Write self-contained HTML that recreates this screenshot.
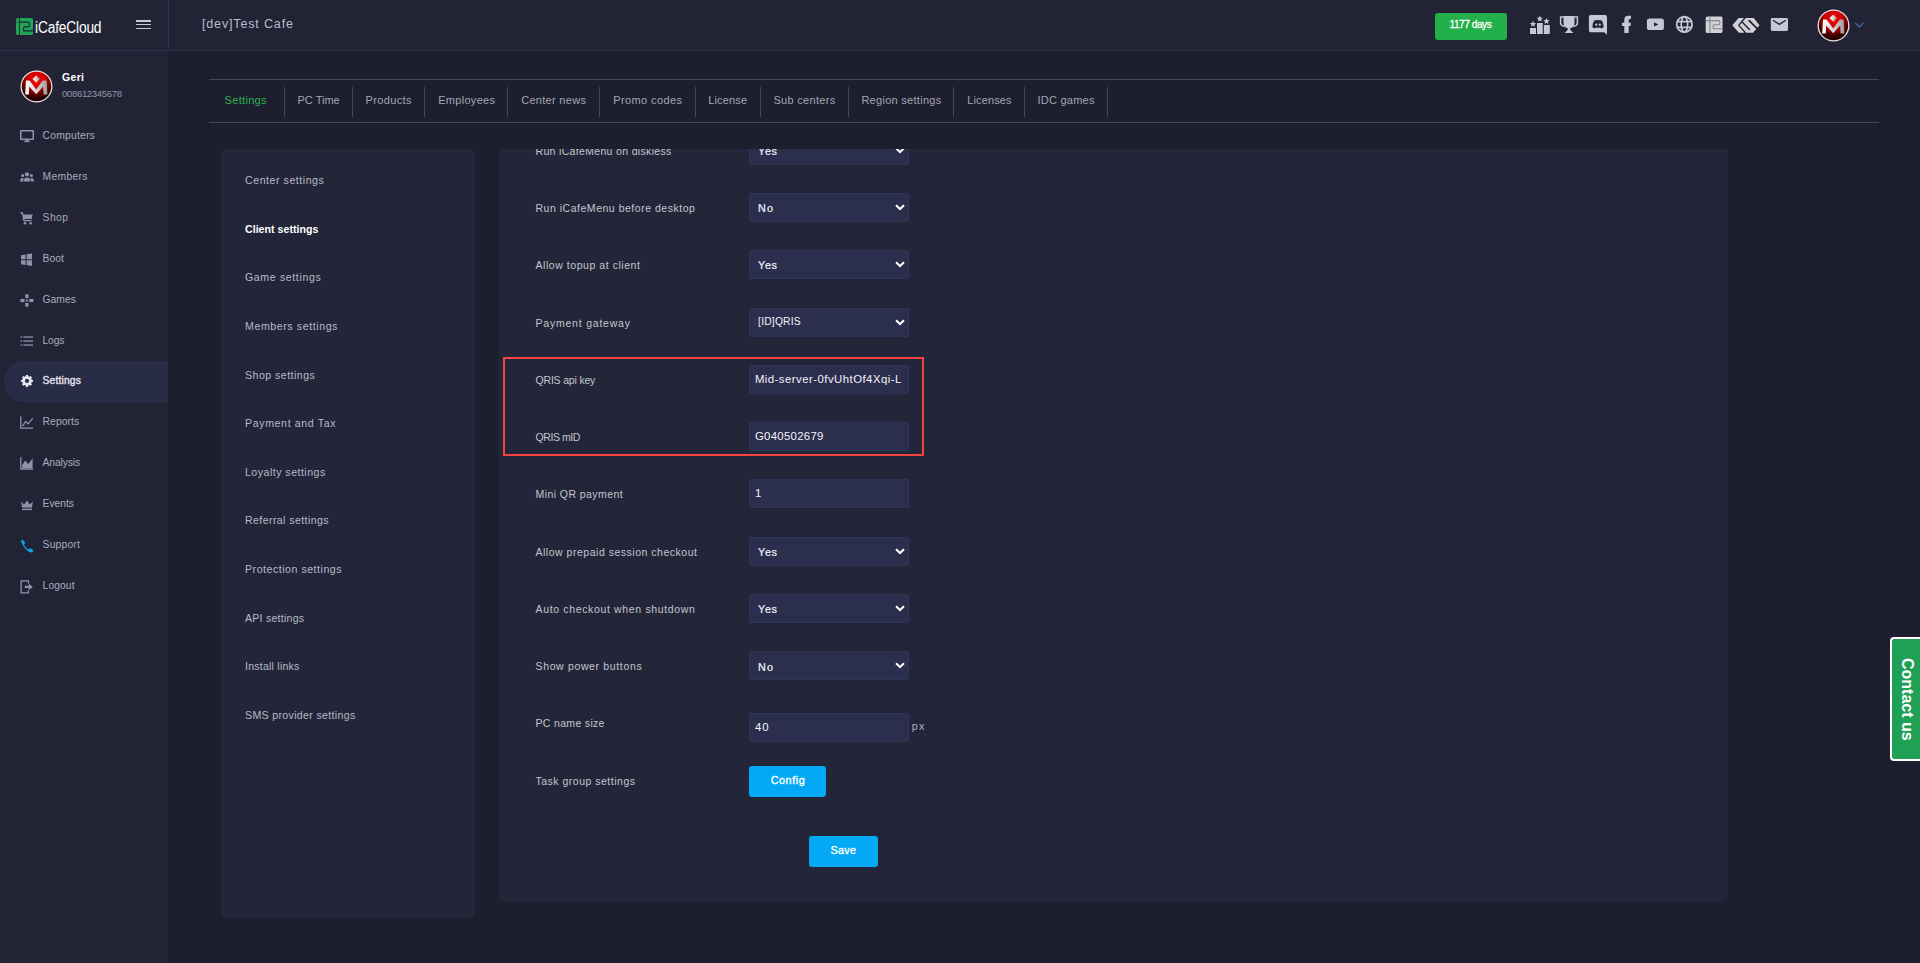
<!DOCTYPE html><html><head><meta charset="utf-8"><style>
*{box-sizing:border-box;margin:0;padding:0}
html,body{width:1920px;height:963px;overflow:hidden;background:#1d1e2e;font-family:"Liberation Sans",sans-serif;}
.abs{position:absolute}
.t{position:absolute;white-space:nowrap;line-height:20px;display:block}
svg{position:absolute;display:block}
</style></head><body>
<div class="abs" style="left:0;top:0;width:1920px;height:50px;background:#222436"></div>
<div class="abs" style="left:0;top:50px;width:1920px;height:1px;background:#30324e"></div>
<div class="abs" style="left:168px;top:0;width:1px;height:50px;background:#30324e"></div>
<div class="abs" style="left:0;top:51px;width:168px;height:912px;background:#222436"></div>
<svg style="left:15px;top:17px" width="19" height="19" viewBox="15 17 19 19">
<rect x="16" y="17.9" width="17" height="17" rx="1.6" fill="#1fa456"/>
<path d="M19.45 17.9 V34.9" stroke="#222436" stroke-width="0.9"/>
<path d="M16 22.15 H19" stroke="#222436" stroke-width="1.2" opacity="0.55"/>
<path d="M19.9 22.15 H28.3 Q29.4 22.15 29.4 23.3 V25.7 Q29.4 26.8 28.3 26.8 H24.7 Q23.6 26.8 23.6 27.9 V30.9 H33" stroke="#222436" stroke-width="1.15" fill="none"/>
</svg>
<span id="t0" class="t" style="letter-spacing:-1.111px;left:35.00px;top:17.96px;font-size:16px;color:#ffffff;font-weight:400;transform:scaleX(0.86);transform-origin:0 0;letter-spacing:-0.2px;">iCafeCloud</span>
<div class="abs" style="left:136px;top:20px;width:15px;height:1.5px;background:#c9cbd4;border-radius:0.5px"></div>
<div class="abs" style="left:136px;top:23.75px;width:15px;height:1.5px;background:#c9cbd4;border-radius:0.5px"></div>
<div class="abs" style="left:136px;top:27.5px;width:15px;height:1.5px;background:#c9cbd4;border-radius:0.5px"></div>
<span id="t1" class="t" style="letter-spacing:0.846px;left:202.00px;top:14.27px;font-size:12.5px;color:#babdc9;font-weight:400;">[dev]Test Cafe</span>
<div class="abs" style="left:1435px;top:13px;width:72px;height:27px;background:#22b04b;border-radius:3px"></div>
<span id="t2" class="t" style="letter-spacing:-0.500px;left:1449.50px;top:15.47px;font-size:10.2px;color:#ffffff;font-weight:400;-webkit-text-stroke:0.3px #fff;">1177 days</span>
<svg style="left:1529px;top:14px" width="22" height="21" viewBox="1529 14 22 21">
<rect x="1530" y="28" width="6" height="6" fill="#c6c9d4"/><rect x="1537" y="23" width="5.7" height="11" fill="#c6c9d4"/><rect x="1543.8" y="25" width="6" height="9" fill="#c6c9d4"/>
<path id="st" d="M0 -3.2 L0.95 -1.1 L3.1 -1 L1.5 0.5 L1.95 2.7 L0 1.6 L-1.95 2.7 L-1.5 0.5 L-3.1 -1 L-0.95 -1.1 Z" fill="#c6c9d4" transform="translate(1533 24)"/>
<path d="M0 -3.2 L0.95 -1.1 L3.1 -1 L1.5 0.5 L1.95 2.7 L0 1.6 L-1.95 2.7 L-1.5 0.5 L-3.1 -1 L-0.95 -1.1 Z" fill="#c6c9d4" transform="translate(1539.8 18.8)"/>
<path d="M0 -3.2 L0.95 -1.1 L3.1 -1 L1.5 0.5 L1.95 2.7 L0 1.6 L-1.95 2.7 L-1.5 0.5 L-3.1 -1 L-0.95 -1.1 Z" fill="#c6c9d4" transform="translate(1546.5 21.2)"/>
</svg>
<svg style="left:1559px;top:15px" width="20" height="19" viewBox="1559 15 20 19">
<path d="M1563.5 16 H1574.5 V23 Q1574.5 27 1570.3 28.2 V30 L1573.5 33 H1564.5 L1567.7 30 V28.2 Q1563.5 27 1563.5 23 Z" fill="#c6c9d4"/>
<path d="M1563.8 17 H1560.6 V23 Q1560.6 25.8 1564.8 26.4" stroke="#c6c9d4" stroke-width="1.5" fill="none"/>
<path d="M1574.2 17 H1577.4 V23 Q1577.4 25.8 1573.2 26.4" stroke="#c6c9d4" stroke-width="1.5" fill="none"/>
</svg>
<svg style="left:1588px;top:14px" width="21" height="22" viewBox="1588 14 21 22">
<path d="M1590.5 15 H1605 Q1607 15 1607 17 V34.8 L1604.2 32.2 H1590.5 Q1588.9 32.2 1588.9 30.6 V16.6 Q1588.9 15 1590.5 15 Z" fill="#c6c9d4"/>
<path d="M1594.2 20.6 Q1598 19.6 1601.8 20.6 Q1603.6 23.6 1603.6 27.2 Q1602.4 28.2 1600.8 28.4 L1600.2 27.4 Q1598 28 1595.8 27.4 L1595.2 28.4 Q1593.6 28.2 1592.4 27.2 Q1592.4 23.6 1594.2 20.6 Z" fill="#222436"/>
<ellipse cx="1596.2" cy="24.6" rx="1.1" ry="1.2" fill="#c6c9d4"/><ellipse cx="1599.8" cy="24.6" rx="1.1" ry="1.2" fill="#c6c9d4"/>
</svg>
<svg style="left:1621px;top:15px" width="11" height="19" viewBox="1621 15 11 19">
<path d="M1624.3 33 V25.9 H1621.9 V22.8 H1624.3 V20 Q1624.3 15.8 1628.3 15.8 H1631 V19 H1629.6 Q1628.7 19 1628.7 20 V22.8 H1630.9 L1630.5 25.9 H1628.7 V33 Z" fill="#c6c9d4"/>
</svg>
<svg style="left:1646px;top:18px" width="19" height="13" viewBox="1646 18 19 13">
<rect x="1646.9" y="18.4" width="17" height="11.7" rx="2.6" fill="#c6c9d4"/>
<path d="M1654 22.2 L1658.4 24.4 L1654 26.6 Z" fill="#222436"/>
</svg>
<svg style="left:1675px;top:15px" width="19" height="19" viewBox="1675 15 19 19">
<circle cx="1684.4" cy="24.4" r="7.7" stroke="#c6c9d4" stroke-width="1.8" fill="none"/>
<ellipse cx="1684.4" cy="24.4" rx="3.2" ry="7.7" stroke="#c6c9d4" stroke-width="1.7" fill="none"/>
<path d="M1677 21.6 H1691.8 M1677 27.3 H1691.8" stroke="#c6c9d4" stroke-width="1.7"/>
</svg>
<svg style="left:1705px;top:16px" width="18" height="18" viewBox="1705 16 18 18">
<rect x="1705.7" y="16.4" width="16.8" height="16.6" rx="1.6" fill="#d1d1d6"/>
<path d="M1709.9 16.4 V33 M1705.7 20.6 H1718.6 Q1719.8 20.6 1719.8 21.8 V23.6 Q1719.8 24.8 1718.6 24.8 H1714.2 Q1713.2 24.8 1713.2 25.8 V28.8 H1722.5" stroke="#85868f" stroke-width="1.1" fill="none"/>
</svg>
<svg style="left:1731px;top:17px" width="30" height="17" viewBox="1731 17 30 17">
<path d="M1738.7 18.1 H1743.9 L1737.9 25.2 L1744.5 32.7 H1738.9 L1732.3 25.2 Z" fill="#d1d1d6"/>
<path d="M1745.8 18.1 H1753.7 L1759.5 25.2 L1753 32.7 H1746.3 L1739.6 25.2 Z" fill="#d1d1d6"/>
<path d="M1741.8 21.8 L1749.5 29.5" stroke="#222436" stroke-width="1.5" stroke-linecap="round"/>
<path d="M1749.2 20.6 L1758.2 29.6" stroke="#222436" stroke-width="1.8" stroke-linecap="round"/>
</svg>
<svg style="left:1770px;top:17px" width="19" height="15" viewBox="1770 17 19 15">
<rect x="1770.8" y="17.9" width="17.2" height="13.1" rx="1.4" fill="#c6c9d4"/>
<path d="M1773 20.2 L1779.4 24.4 L1785.8 20.2" stroke="#222436" stroke-width="1.3" fill="none"/>
</svg>
<svg style="left:1816.5px;top:8.5px" width="33" height="33" viewBox="0 0 33 33">
<defs><radialGradient id="rga" cx="0.5" cy="0.28" r="0.75"><stop offset="0" stop-color="#ff0a0a"/><stop offset="0.4" stop-color="#cc0000"/><stop offset="0.72" stop-color="#4a0000"/><stop offset="0.9" stop-color="#1c0000"/><stop offset="1" stop-color="#700000"/></radialGradient>
<linearGradient id="mga" x1="0" y1="0" x2="1" y2="0"><stop offset="0" stop-color="#ffffff"/><stop offset="0.5" stop-color="#d8d8d8"/><stop offset="1" stop-color="#9a9a9a"/></linearGradient></defs>
<circle cx="16.5" cy="16.5" r="16" fill="#e8e0e0"/>
<circle cx="16.5" cy="16.5" r="14.7" fill="url(#rga)"/>
<path d="M5.2 24.4 L6 10.6 H9.6 L16.2 19.6 L22.8 10.6 H26.6 L27.4 24.4 H23.6 L23.2 16.6 L16.2 24.2 L9.2 16.6 L8.8 24.4 Z" fill="url(#mga)"/>
<path d="M16.2 5.4 L19.8 9.1 L16.2 12.8 L12.6 9.1 Z" fill="url(#mga)"/>
</svg>
<svg style="left:1854px;top:21px" width="11" height="8" viewBox="0 0 11 8"><path d="M1.2 1.8 L5.3 5.9 L9.4 1.8" stroke="#5272a2" stroke-width="1.1" fill="none"/></svg>
<svg style="left:19.5px;top:69.5px" width="33" height="33" viewBox="0 0 33 33">
<defs><radialGradient id="rgb" cx="0.5" cy="0.28" r="0.75"><stop offset="0" stop-color="#ff0a0a"/><stop offset="0.4" stop-color="#cc0000"/><stop offset="0.72" stop-color="#4a0000"/><stop offset="0.9" stop-color="#1c0000"/><stop offset="1" stop-color="#700000"/></radialGradient>
<linearGradient id="mgb" x1="0" y1="0" x2="1" y2="0"><stop offset="0" stop-color="#ffffff"/><stop offset="0.5" stop-color="#d8d8d8"/><stop offset="1" stop-color="#9a9a9a"/></linearGradient></defs>
<circle cx="16.5" cy="16.5" r="16" fill="#e8e0e0"/>
<circle cx="16.5" cy="16.5" r="14.7" fill="url(#rgb)"/>
<path d="M5.2 24.4 L6 10.6 H9.6 L16.2 19.6 L22.8 10.6 H26.6 L27.4 24.4 H23.6 L23.2 16.6 L16.2 24.2 L9.2 16.6 L8.8 24.4 Z" fill="url(#mgb)"/>
<path d="M16.2 5.4 L19.8 9.1 L16.2 12.8 L12.6 9.1 Z" fill="url(#mgb)"/>
</svg>
<span id="t3" class="t" style="letter-spacing:0.333px;left:62.00px;top:67.36px;font-size:10.5px;color:#ffffff;font-weight:700;">Geri</span>
<span id="t4" class="t" style="letter-spacing:-0.309px;left:62.00px;top:83.71px;font-size:9.5px;color:#9296a8;font-weight:400;">008612345678</span>
<div class="abs" style="left:4px;top:361px;width:164px;height:41px;background:#292c47;border-radius:20px 0 0 20px"></div>
<svg style="left:20px;top:130px" width="14" height="14" viewBox="0 0 14 14"><rect x="0.75" y="0.75" width="12.5" height="8.5" rx="0.3" fill="none" stroke="#8e93a8" stroke-width="1.5"/><rect x="5.5" y="9.5" width="3" height="1.6" fill="#8e93a8"/><rect x="4.2" y="10.8" width="5.6" height="1.3" fill="#8e93a8"/></svg>
<span id="t5" class="t" style="letter-spacing:0.225px;left:42.60px;top:126.43px;font-size:10.3px;color:#a9acbb;font-weight:400;">Computers</span>
<svg style="left:20px;top:171px" width="14" height="14" viewBox="0 0 14 14"><circle cx="7" cy="3.3" r="2.1" fill="#8e93a8"/><circle cx="2.6" cy="4.6" r="1.5" fill="#8e93a8"/><circle cx="11.4" cy="4.6" r="1.5" fill="#8e93a8"/><path d="M3.6 10.6 Q3.6 6.4 7 6.4 Q10.4 6.4 10.4 10.6 Z" fill="#8e93a8"/><path d="M0 10.6 Q0 6.9 2.6 6.9 Q3.6 6.9 3.9 7.4 Q3 8.6 3 10.6 Z" fill="#8e93a8"/><path d="M14 10.6 Q14 6.9 11.4 6.9 Q10.4 6.9 10.1 7.4 Q11 8.6 11 10.6 Z" fill="#8e93a8"/></svg>
<span id="t6" class="t" style="letter-spacing:0.333px;left:42.60px;top:167.43px;font-size:10.3px;color:#a9acbb;font-weight:400;">Members</span>
<svg style="left:20px;top:212px" width="14" height="14" viewBox="0 0 14 14"><path d="M0.3 1 H2.4 L4 8.6 H11.6" stroke="#8e93a8" stroke-width="1.4" fill="none"/><path d="M3 2.6 H12.8 L11.6 7 H3.9 Z" fill="#8e93a8"/><circle cx="5" cy="11.3" r="1.3" fill="#8e93a8"/><circle cx="10.6" cy="11.3" r="1.3" fill="#8e93a8"/></svg>
<span id="t7" class="t" style="letter-spacing:0.467px;left:42.60px;top:208.43px;font-size:10.3px;color:#a9acbb;font-weight:400;">Shop</span>
<svg style="left:20px;top:253px" width="14" height="14" viewBox="0 0 14 14"><path d="M1 2.2 L5.6 1.5 V6.2 H1 Z M6.6 1.3 L12 0.4 V6.2 H6.6 Z M1 7.2 H5.6 V11.9 L1 11.2 Z M6.6 7.2 H12 V13 L6.6 12.1 Z" fill="#8e93a8"/></svg>
<span id="t8" class="t" style="letter-spacing:0.000px;left:42.60px;top:249.43px;font-size:10.3px;color:#a9acbb;font-weight:400;">Boot</span>
<svg style="left:20px;top:294px" width="14" height="14" viewBox="0 0 14 14"><rect x="5.3" y="0.3" width="3.2" height="3.8" fill="#8e93a8"/><rect x="5.3" y="8.9" width="3.2" height="3.8" fill="#8e93a8"/><rect x="0.4" y="4.9" width="4.2" height="3.2" fill="#8e93a8"/><rect x="9.2" y="4.9" width="4.2" height="3.2" fill="#8e93a8"/><rect x="5.9" y="5.5" width="2" height="2" fill="#8e93a8"/></svg>
<span id="t9" class="t" style="letter-spacing:0.000px;left:42.60px;top:290.43px;font-size:10.3px;color:#a9acbb;font-weight:400;">Games</span>
<svg style="left:20px;top:335px" width="14" height="14" viewBox="0 0 14 14"><g fill="#8e93a8"><rect x="0.5" y="1.4" width="1.6" height="1.3"/><rect x="3.3" y="1.4" width="9.7" height="1.3"/><rect x="0.5" y="5.4" width="1.6" height="1.3"/><rect x="3.3" y="5.4" width="9.7" height="1.3"/><rect x="0.5" y="9.4" width="1.6" height="1.3"/><rect x="3.3" y="9.4" width="9.7" height="1.3"/></g></svg>
<span id="t10" class="t" style="letter-spacing:-0.200px;left:42.60px;top:331.43px;font-size:10.3px;color:#a9acbb;font-weight:400;">Logs</span>
<svg style="left:20px;top:375px" width="14" height="14" viewBox="0 0 14 14"><path fill="#e6e7ee" d="M5.8 0.3 H8.2 L8.5 2 L9.8 2.6 L11.3 1.7 L12.9 3.3 L12 4.8 L12.6 6.1 L14.2 6.4 V8.6 L12.6 8.9 L12 10.2 L12.9 11.7 L11.3 13.3 L9.8 12.4 L8.5 13 L8.2 14.7 H5.8 L5.5 13 L4.2 12.4 L2.7 13.3 L1.1 11.7 L2 10.2 L1.4 8.9 L-0.2 8.6 V6.4 L1.4 6.1 L2 4.8 L1.1 3.3 L2.7 1.7 L4.2 2.6 L5.5 2 Z M7 5 A2.5 2.5 0 1 0 7 10 A2.5 2.5 0 1 0 7 5 Z" transform="translate(7 5.9) scale(0.84) translate(-7 -7.5)"/></svg>
<span id="t11" class="t" style="letter-spacing:0.143px;left:42.60px;top:371.43px;font-size:10.3px;color:#e4e6ee;font-weight:400;-webkit-text-stroke:0.35px #e4e6ee;">Settings</span>
<svg style="left:20px;top:416px" width="14" height="14" viewBox="0 0 14 14"><path d="M0.8 0.2 V12.2 H13" stroke="#8e93a8" stroke-width="1.3" fill="none"/><path d="M2.6 10.2 L5.6 5.4 L8.2 7.8 L12.8 2.2" stroke="#8e93a8" stroke-width="1.3" fill="none"/></svg>
<span id="t12" class="t" style="letter-spacing:0.067px;left:42.60px;top:412.43px;font-size:10.3px;color:#a9acbb;font-weight:400;">Reports</span>
<svg style="left:20px;top:457px" width="14" height="14" viewBox="0 0 14 14"><path d="M0.8 0.2 V12.2 H13" stroke="#8e93a8" stroke-width="1.3" fill="none"/><path d="M2.2 11.6 V8 L5.2 3.4 L8.2 7 L12.6 1.6 V11.6 Z" fill="#8e93a8"/></svg>
<span id="t13" class="t" style="letter-spacing:-0.114px;left:42.60px;top:453.43px;font-size:10.3px;color:#a9acbb;font-weight:400;">Analysis</span>
<svg style="left:20px;top:498px" width="14" height="14" viewBox="0 0 14 14"><path d="M1.2 3.4 L4.2 6.6 L7 2.6 L9.8 6.6 L12.8 3.4 L12 9.4 H2 Z" fill="#8e93a8"/><rect x="2" y="10.6" width="10" height="1.5" fill="#8e93a8"/></svg>
<span id="t14" class="t" style="letter-spacing:-0.040px;left:42.60px;top:494.43px;font-size:10.3px;color:#a9acbb;font-weight:400;">Events</span>
<svg style="left:20px;top:539px" width="14" height="14" viewBox="0 0 14 14"><path d="M2.9 0.6 L5.3 4 L3.9 5.8 Q5.4 9 8.6 10.6 L10.4 9.2 L13.6 11.4 L12.2 13.6 Q5.4 13.2 0.8 2 Z" fill="#0aa3ee"/></svg>
<span id="t15" class="t" style="letter-spacing:0.200px;left:42.60px;top:535.43px;font-size:10.3px;color:#a9acbb;font-weight:400;">Support</span>
<svg style="left:20px;top:580px" width="14" height="14" viewBox="0 0 14 14"><path d="M8.4 3.6 V0.9 H1.1 V12.9 H8.4 V10.2" stroke="#8e93a8" stroke-width="1.3" fill="none"/><path d="M4.8 5.8 H8.8 V3.6 L12.8 6.9 L8.8 10.2 V8 H4.8 Z" fill="#8e93a8"/></svg>
<span id="t16" class="t" style="letter-spacing:0.080px;left:42.60px;top:576.43px;font-size:10.3px;color:#a9acbb;font-weight:400;">Logout</span>
<div class="abs" style="left:209px;top:79px;width:1670px;height:1px;background:#444658"></div>
<div class="abs" style="left:209px;top:122px;width:1670px;height:1px;background:#444658"></div>
<span id="t17" class="t" style="letter-spacing:0.314px;left:224.60px;top:90.19px;font-size:11px;color:#2db24e;font-weight:400;">Settings</span>
<div class="abs" style="left:284px;top:87px;width:1px;height:30px;background:#444658"></div>
<span id="t18" class="t" style="letter-spacing:0.000px;left:297.50px;top:90.19px;font-size:11px;color:#a3a6b3;font-weight:400;">PC Time</span>
<div class="abs" style="left:352px;top:87px;width:1px;height:30px;background:#444658"></div>
<span id="t19" class="t" style="letter-spacing:0.371px;left:365.50px;top:90.19px;font-size:11px;color:#a3a6b3;font-weight:400;">Products</span>
<div class="abs" style="left:424px;top:87px;width:1px;height:30px;background:#444658"></div>
<span id="t20" class="t" style="letter-spacing:0.300px;left:438.20px;top:90.19px;font-size:11px;color:#a3a6b3;font-weight:400;">Employees</span>
<div class="abs" style="left:507px;top:87px;width:1px;height:30px;background:#444658"></div>
<span id="t21" class="t" style="letter-spacing:0.300px;left:521.20px;top:90.19px;font-size:11px;color:#a3a6b3;font-weight:400;">Center news</span>
<div class="abs" style="left:599px;top:87px;width:1px;height:30px;background:#444658"></div>
<span id="t22" class="t" style="letter-spacing:0.400px;left:613.20px;top:90.19px;font-size:11px;color:#a3a6b3;font-weight:400;">Promo codes</span>
<div class="abs" style="left:695px;top:87px;width:1px;height:30px;background:#444658"></div>
<span id="t23" class="t" style="letter-spacing:0.167px;left:708.20px;top:90.19px;font-size:11px;color:#a3a6b3;font-weight:400;">License</span>
<div class="abs" style="left:760px;top:87px;width:1px;height:30px;background:#444658"></div>
<span id="t24" class="t" style="letter-spacing:0.320px;left:773.40px;top:90.19px;font-size:11px;color:#a3a6b3;font-weight:400;">Sub centers</span>
<div class="abs" style="left:848px;top:87px;width:1px;height:30px;background:#444658"></div>
<span id="t25" class="t" style="letter-spacing:0.286px;left:861.40px;top:90.19px;font-size:11px;color:#a3a6b3;font-weight:400;">Region settings</span>
<div class="abs" style="left:953px;top:87px;width:1px;height:30px;background:#444658"></div>
<span id="t26" class="t" style="letter-spacing:0.143px;left:967.20px;top:90.19px;font-size:11px;color:#a3a6b3;font-weight:400;">Licenses</span>
<div class="abs" style="left:1024px;top:87px;width:1px;height:30px;background:#444658"></div>
<span id="t27" class="t" style="letter-spacing:0.250px;left:1037.40px;top:90.19px;font-size:11px;color:#a3a6b3;font-weight:400;">IDC games</span>
<div class="abs" style="left:1107px;top:87px;width:1px;height:30px;background:#444658"></div>
<div class="abs" style="left:221px;top:149px;width:254px;height:770px;background:#232538;border-radius:5px"></div>
<span id="t28" class="t" style="letter-spacing:0.543px;left:245.00px;top:170.33px;font-size:10.6px;color:#b8bac7;font-weight:400;">Center settings</span>
<span id="t29" class="t" style="letter-spacing:0.029px;left:245.00px;top:219.33px;font-size:10.6px;color:#ffffff;font-weight:700;">Client settings</span>
<span id="t30" class="t" style="letter-spacing:0.617px;left:245.00px;top:267.33px;font-size:10.6px;color:#b8bac7;font-weight:400;">Game settings</span>
<span id="t31" class="t" style="letter-spacing:0.587px;left:245.00px;top:316.33px;font-size:10.6px;color:#b8bac7;font-weight:400;">Members settings</span>
<span id="t32" class="t" style="letter-spacing:0.467px;left:245.00px;top:365.33px;font-size:10.6px;color:#b8bac7;font-weight:400;">Shop settings</span>
<span id="t33" class="t" style="letter-spacing:0.629px;left:245.00px;top:413.33px;font-size:10.6px;color:#b8bac7;font-weight:400;">Payment and Tax</span>
<span id="t34" class="t" style="letter-spacing:0.480px;left:245.00px;top:462.33px;font-size:10.6px;color:#b8bac7;font-weight:400;">Loyalty settings</span>
<span id="t35" class="t" style="letter-spacing:0.400px;left:245.00px;top:510.33px;font-size:10.6px;color:#b8bac7;font-weight:400;">Referral settings</span>
<span id="t36" class="t" style="letter-spacing:0.522px;left:245.00px;top:559.33px;font-size:10.6px;color:#b8bac7;font-weight:400;">Protection settings</span>
<span id="t37" class="t" style="letter-spacing:0.236px;left:245.00px;top:608.33px;font-size:10.6px;color:#b8bac7;font-weight:400;">API settings</span>
<span id="t38" class="t" style="letter-spacing:0.217px;left:245.00px;top:656.33px;font-size:10.6px;color:#b8bac7;font-weight:400;">Install links</span>
<span id="t39" class="t" style="letter-spacing:0.330px;left:245.00px;top:705.33px;font-size:10.6px;color:#b8bac7;font-weight:400;">SMS provider settings</span>
<div class="abs" style="left:499px;top:149px;width:1229px;height:753px;background:#232538;border-radius:0 0 5px 5px;overflow:hidden">
<span id="t40" class="t" style="letter-spacing:0.333px;left:36.50px;top:-7.64px;font-size:10.5px;color:#c3c5cf;font-weight:400;">Run iCafeMenu on diskless</span>
<div class="abs" style="left:250px;top:-13.1px;width:160px;height:29px;background:#2c2e4e;border:1px solid #31345a;border-radius:2px"></div>
<span id="t41" class="t" style="letter-spacing:0.600px;left:259.10px;top:-7.84px;font-size:10.8px;color:#f2f3f7;font-weight:400;-webkit-text-stroke:0.2px #f2f3f7;">Yes</span>
<svg style="left:396px;top:-2.0999999999999943px" width="10" height="7" viewBox="0 0 10 7"><path d="M1 1.2 L5 5 L9 1.2" stroke="#ffffff" stroke-width="2" fill="none"/></svg>
<span id="t42" class="t" style="letter-spacing:0.519px;left:36.50px;top:49.36px;font-size:10.5px;color:#c3c5cf;font-weight:400;">Run iCafeMenu before desktop</span>
<div class="abs" style="left:250px;top:44.0px;width:160px;height:29px;background:#2c2e4e;border:1px solid #31345a;border-radius:2px"></div>
<span id="t43" class="t" style="letter-spacing:1.000px;left:259.10px;top:49.26px;font-size:10.8px;color:#f2f3f7;font-weight:400;-webkit-text-stroke:0.2px #f2f3f7;">No</span>
<svg style="left:396px;top:55px" width="10" height="7" viewBox="0 0 10 7"><path d="M1 1.2 L5 5 L9 1.2" stroke="#ffffff" stroke-width="2" fill="none"/></svg>
<span id="t44" class="t" style="letter-spacing:0.550px;left:36.50px;top:106.36px;font-size:10.5px;color:#c3c5cf;font-weight:400;">Allow topup at client</span>
<div class="abs" style="left:250px;top:101.2px;width:160px;height:29px;background:#2c2e4e;border:1px solid #31345a;border-radius:2px"></div>
<span id="t45" class="t" style="letter-spacing:0.600px;left:259.10px;top:106.46px;font-size:10.8px;color:#f2f3f7;font-weight:400;-webkit-text-stroke:0.2px #f2f3f7;">Yes</span>
<svg style="left:396px;top:112.19999999999999px" width="10" height="7" viewBox="0 0 10 7"><path d="M1 1.2 L5 5 L9 1.2" stroke="#ffffff" stroke-width="2" fill="none"/></svg>
<span id="t46" class="t" style="letter-spacing:0.786px;left:36.50px;top:164.36px;font-size:10.5px;color:#c3c5cf;font-weight:400;">Payment gateway</span>
<div class="abs" style="left:250px;top:159.3px;width:160px;height:29px;background:#2c2e4e;border:1px solid #31345a;border-radius:2px"></div>
<span id="t47" class="t" style="letter-spacing:0.200px;left:259.10px;top:163.33px;font-size:10.3px;color:#f2f3f7;font-weight:400;">[ID]QRIS</span>
<svg style="left:396px;top:170.3px" width="10" height="7" viewBox="0 0 10 7"><path d="M1 1.2 L5 5 L9 1.2" stroke="#ffffff" stroke-width="2" fill="none"/></svg>
<span id="t48" class="t" style="letter-spacing:-0.182px;left:36.50px;top:221.36px;font-size:10.5px;color:#c3c5cf;font-weight:400;">QRIS api key</span>
<div class="abs" style="left:250px;top:216.1px;width:160px;height:29px;background:#2c2e4e;border:1px solid #31345a;border-radius:2px"></div>
<span id="t49" class="t" style="letter-spacing:0.458px;left:255.90px;top:220.35px;font-size:11.4px;color:#f2f3f7;font-weight:400;">Mid-server-0fvUhtOf4Xqi-L</span>
<span id="t50" class="t" style="letter-spacing:-0.429px;left:36.50px;top:278.36px;font-size:10.5px;color:#c3c5cf;font-weight:400;">QRIS mID</span>
<div class="abs" style="left:250px;top:273.0px;width:160px;height:29px;background:#2c2e4e;border:1px solid #31345a;border-radius:2px"></div>
<span id="t51" class="t" style="letter-spacing:0.289px;left:255.90px;top:277.25px;font-size:11.4px;color:#f2f3f7;font-weight:400;">G040502679</span>
<span id="t52" class="t" style="letter-spacing:0.429px;left:36.50px;top:335.36px;font-size:10.5px;color:#c3c5cf;font-weight:400;">Mini QR payment</span>
<div class="abs" style="left:250px;top:330.0px;width:160px;height:29px;background:#2c2e4e;border:1px solid #31345a;border-radius:2px"></div>
<span id="t53" class="t" style="left:255.90px;top:334.25px;font-size:11.4px;color:#f2f3f7;font-weight:400;">1</span>
<span id="t54" class="t" style="letter-spacing:0.517px;left:36.50px;top:393.36px;font-size:10.5px;color:#c3c5cf;font-weight:400;">Allow prepaid session checkout</span>
<div class="abs" style="left:250px;top:388.1px;width:160px;height:29px;background:#2c2e4e;border:1px solid #31345a;border-radius:2px"></div>
<span id="t55" class="t" style="letter-spacing:0.600px;left:259.10px;top:393.36px;font-size:10.8px;color:#f2f3f7;font-weight:400;-webkit-text-stroke:0.2px #f2f3f7;">Yes</span>
<svg style="left:396px;top:399.1px" width="10" height="7" viewBox="0 0 10 7"><path d="M1 1.2 L5 5 L9 1.2" stroke="#ffffff" stroke-width="2" fill="none"/></svg>
<span id="t56" class="t" style="letter-spacing:0.654px;left:36.50px;top:450.36px;font-size:10.5px;color:#c3c5cf;font-weight:400;">Auto checkout when shutdown</span>
<div class="abs" style="left:250px;top:445.1px;width:160px;height:29px;background:#2c2e4e;border:1px solid #31345a;border-radius:2px"></div>
<span id="t57" class="t" style="letter-spacing:0.600px;left:259.10px;top:450.36px;font-size:10.8px;color:#f2f3f7;font-weight:400;-webkit-text-stroke:0.2px #f2f3f7;">Yes</span>
<svg style="left:396px;top:456.1px" width="10" height="7" viewBox="0 0 10 7"><path d="M1 1.2 L5 5 L9 1.2" stroke="#ffffff" stroke-width="2" fill="none"/></svg>
<span id="t58" class="t" style="letter-spacing:0.647px;left:36.50px;top:507.36px;font-size:10.5px;color:#c3c5cf;font-weight:400;">Show power buttons</span>
<div class="abs" style="left:250px;top:502.3px;width:160px;height:29px;background:#2c2e4e;border:1px solid #31345a;border-radius:2px"></div>
<span id="t59" class="t" style="letter-spacing:1.000px;left:259.10px;top:507.56px;font-size:10.8px;color:#f2f3f7;font-weight:400;-webkit-text-stroke:0.2px #f2f3f7;">No</span>
<svg style="left:396px;top:513.3px" width="10" height="7" viewBox="0 0 10 7"><path d="M1 1.2 L5 5 L9 1.2" stroke="#ffffff" stroke-width="2" fill="none"/></svg>
<span id="t60" class="t" style="letter-spacing:0.327px;left:36.50px;top:564.36px;font-size:10.5px;color:#c3c5cf;font-weight:400;">PC name size</span>
<div class="abs" style="left:250px;top:563.9px;width:160px;height:29px;background:#2c2e4e;border:1px solid #31345a;border-radius:2px"></div>
<span id="t61" class="t" style="letter-spacing:1.000px;left:255.90px;top:568.15px;font-size:11.4px;color:#f2f3f7;font-weight:400;">40</span>
<span id="t62" class="t" style="left:412.70px;top:566.76px;font-size:10.8px;color:#aeb1bd;font-weight:400;letter-spacing:1.2px;">px</span>
<span id="t63" class="t" style="letter-spacing:0.500px;left:36.50px;top:622.36px;font-size:10.5px;color:#c3c5cf;font-weight:400;">Task group settings</span>
<div class="abs" style="left:250px;top:617px;width:77px;height:31px;background:#03a9f4;border-radius:3px"></div>
<span id="t64" class="t" style="letter-spacing:0.560px;left:271.70px;top:620.86px;font-size:10.8px;color:#ffffff;font-weight:400;-webkit-text-stroke:0.35px #fff;">Config</span>
<div class="abs" style="left:310px;top:687px;width:69px;height:31px;background:#03a9f4;border-radius:3px"></div>
<span id="t65" class="t" style="letter-spacing:0.267px;left:331.60px;top:690.86px;font-size:10.8px;color:#ffffff;font-weight:400;-webkit-text-stroke:0.35px #fff;">Save</span>
<div class="abs" style="left:4px;top:208px;width:421px;height:99px;border:2px solid #f5433f"></div>
</div>
<div class="abs" style="left:1890px;top:637px;width:32px;height:124px;background:#1fa055;border:2px solid #ffffff;border-right:none;border-radius:4px 0 0 4px"></div>
<span id="contact" class="t" style="left:1897px;top:658px;font-size:16px;line-height:20px;font-weight:700;color:#fff;writing-mode:vertical-rl">Contact us</span>
</body></html>
